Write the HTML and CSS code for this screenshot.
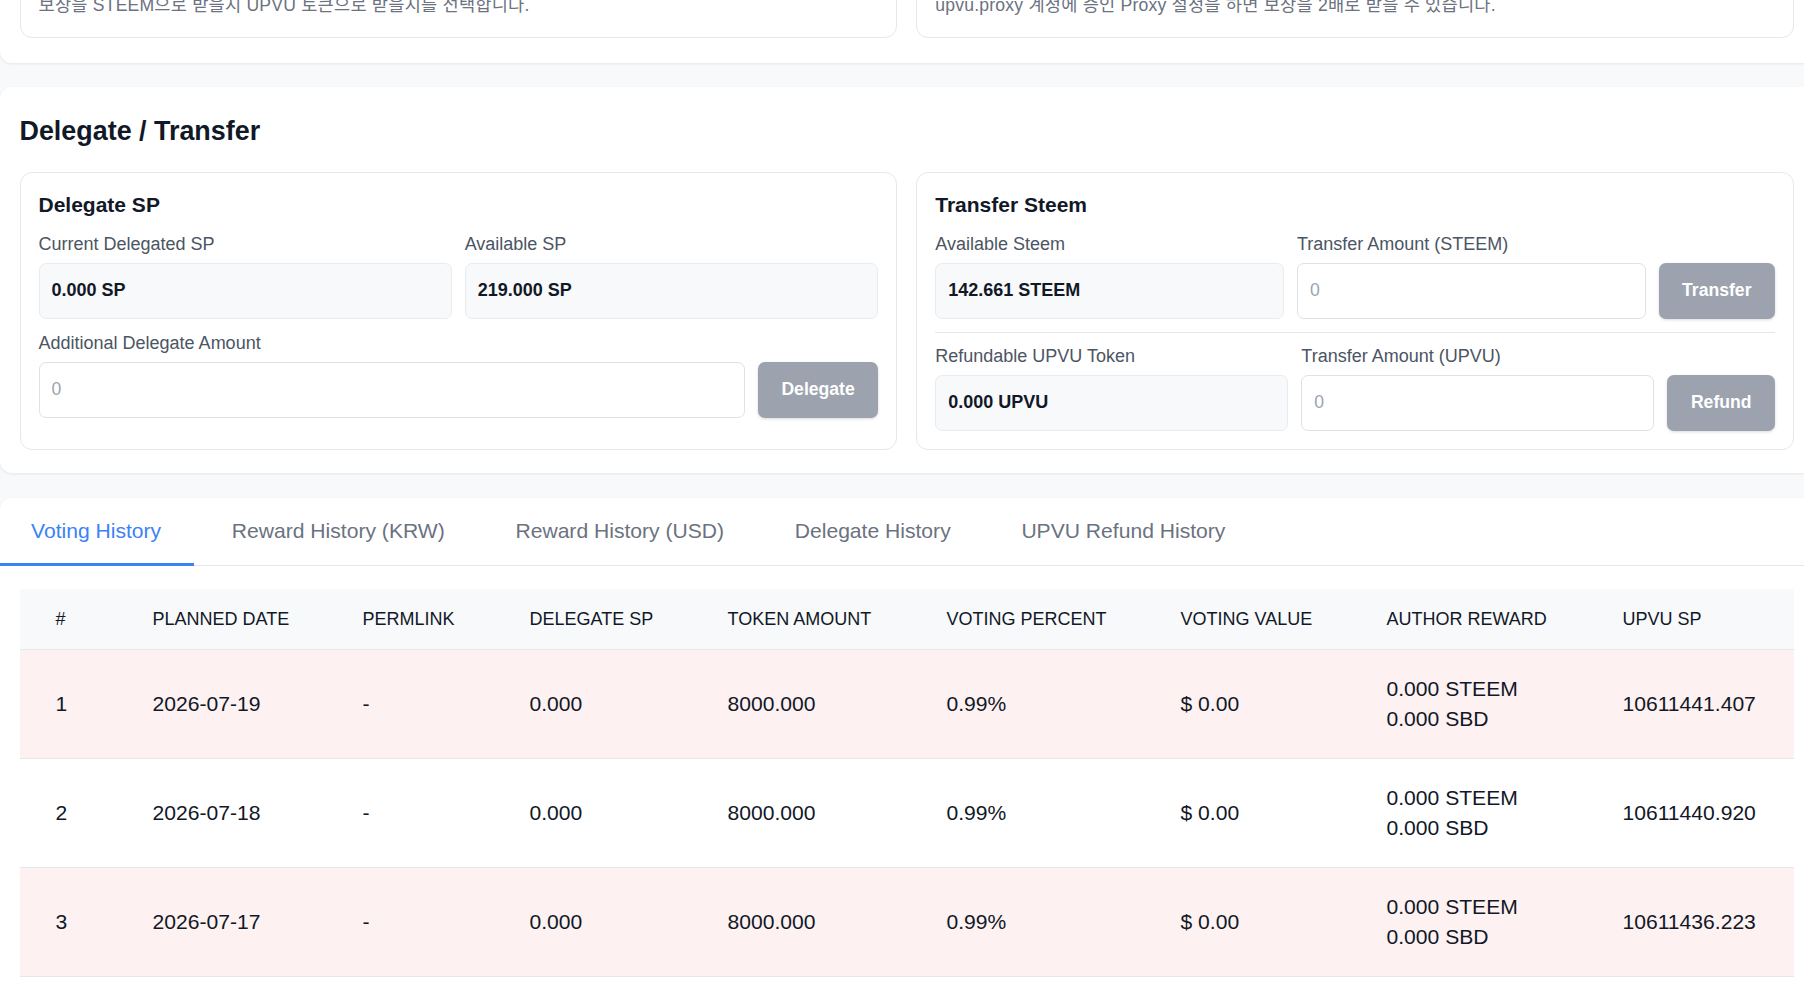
FILE: index.html
```html
<!DOCTYPE html>
<html lang="ko">
<head>
<meta charset="utf-8">
<title>UPVU - Delegate / Transfer</title>
<link rel="stylesheet" href="styles.css">
</head>
<body>
<div class="page">
  <section class="card card-top">
    <div class="grid2">
      <div class="box"><p class="desc">보상을 STEEM으로 받을시 UPVU 토큰으로 받을시를 선택합니다.</p></div>
      <div class="box"><p class="desc">upvu.proxy 계정에 증인 Proxy 설정을 하면 보상을 2배로 받을 수 있습니다.</p></div>
    </div>
  </section>

  <section class="card card-dt">
    <h2 class="section-title">Delegate / Transfer</h2>
    <div class="grid2">
      <div class="box">
        <h3 class="box-title">Delegate SP</h3>
        <div class="fields two">
          <label class="lbl">Current Delegated SP</label>
          <label class="lbl">Available SP</label>
          <div class="value">0.000 SP</div>
          <div class="value">219.000 SP</div>
        </div>
        <div class="fields one mt">
          <label class="lbl">Additional Delegate Amount</label>
          <div class="input-row">
            <input class="input" type="text" placeholder="0">
            <button class="btn">Delegate</button>
          </div>
        </div>
      </div>

      <div class="box">
        <h3 class="box-title">Transfer Steem</h3>
        <div class="fields three">
          <label class="lbl">Available Steem</label>
          <label class="lbl">Transfer Amount (STEEM)</label>
          <span></span>
          <div class="value">142.661 STEEM</div>
          <input class="input" type="text" placeholder="0">
          <button class="btn">Transfer</button>
        </div>
        <hr class="sep">
        <div class="fields three">
          <label class="lbl">Refundable UPVU Token</label>
          <label class="lbl">Transfer Amount (UPVU)</label>
          <span></span>
          <div class="value">0.000 UPVU</div>
          <input class="input" type="text" placeholder="0">
          <button class="btn">Refund</button>
        </div>
      </div>
    </div>
  </section>

  <section class="card card-history">
    <nav class="tabs">
      <span class="tab active">Voting History</span>
      <span class="tab">Reward History (KRW)</span>
      <span class="tab">Reward History (USD)</span>
      <span class="tab">Delegate History</span>
      <span class="tab">UPVU Refund History</span>
    </nav>
    <div class="table-wrap">
      <table class="history">
        <colgroup>
          <col class="c1"><col class="c2"><col class="c3"><col class="c4"><col class="c5"><col class="c6"><col class="c7"><col class="c8"><col class="c9">
        </colgroup>
        <thead>
          <tr>
            <th>#</th><th>Planned Date</th><th>Permlink</th><th>Delegate SP</th><th>Token Amount</th><th>Voting Percent</th><th>Voting Value</th><th>Author Reward</th><th>UPVU SP</th>
          </tr>
        </thead>
        <tbody>
          <tr class="pending">
            <td>1</td><td>2026-07-19</td><td>-</td><td>0.000</td><td>8000.000</td><td>0.99%</td><td>$ 0.00</td><td>0.000 STEEM<br>0.000 SBD</td><td>10611441.407</td>
          </tr>
          <tr>
            <td>2</td><td>2026-07-18</td><td>-</td><td>0.000</td><td>8000.000</td><td>0.99%</td><td>$ 0.00</td><td>0.000 STEEM<br>0.000 SBD</td><td>10611440.920</td>
          </tr>
          <tr class="pending">
            <td>3</td><td>2026-07-17</td><td>-</td><td>0.000</td><td>8000.000</td><td>0.99%</td><td>$ 0.00</td><td>0.000 STEEM<br>0.000 SBD</td><td>10611436.223</td>
          </tr>
        </tbody>
      </table>
    </div>
  </section>
</div>
</body>
</html>
```

FILE: styles.css
```css
html, body {
  margin: 0;
  padding: 0;
  overflow: hidden;
  background: #f8f9fa;
}

body {
  font-family: "Liberation Sans", Arial, "Noto Sans CJK KR", sans-serif;
  color: #111827;
  font-size: 17.6px;
}

.page {
  width: 1813.5px;
  margin-top: -46.5px;
  display: flex;
  flex-direction: column;
  gap: 24.5px;
}

.card {
  background: #fff;
  border-radius: 12px;
  box-shadow: 0 1px 3px rgba(0, 0, 0, 0.08);
}

.card-top {
  padding: 19.5px 19.5px 24.5px;
}

.grid2 {
  display: grid;
  grid-template-columns: 1fr 1fr;
  gap: 19px;
}

.box {
  border: 1px solid #e5e7eb;
  border-radius: 12px;
  padding: 18px;
  background: #fff;
}

.desc {
  margin: 0;
  font-size: 17.6px;
  line-height: 27px;
  color: #6b7280;
  letter-spacing: 0.2px;
}

.card-dt {
  padding: 27.85px 19.5px 23.7px;
}

.section-title {
  margin: 0 0 24.85px;
  font-size: 26.9px;
  line-height: 32px;
  font-weight: 700;
  color: #111827;
}

.box-title {
  margin: 0 0 14.5px;
  font-size: 21px;
  line-height: 28px;
  font-weight: 700;
  color: #111827;
}

.fields {
  display: grid;
  column-gap: 12.5px;
  row-gap: 7.5px;
}

.fields.two {
  grid-template-columns: 1fr 1fr;
}

.fields.three {
  grid-template-columns: 1fr 1fr auto;
  column-gap: 13px;
}

.fields.one {
  grid-template-columns: 1fr;
}

.fields.mt {
  margin-top: 13.6px;
}

.lbl {
  font-size: 18px;
  line-height: 22px;
  color: #4b5563;
}

.value {
  box-sizing: border-box;
  height: 56px;
  display: flex;
  align-items: center;
  padding: 0 12px;
  background: #f8f9fa;
  border: 1px solid #e9ecef;
  border-radius: 7px;
  font-size: 18px;
  font-weight: 700;
  color: #111827;
}

.input-row {
  display: grid;
  grid-template-columns: 1fr auto;
  gap: 13px;
}

.input {
  box-sizing: border-box;
  min-width: 0;
  width: 100%;
  height: 56px;
  padding: 0 12px;
  border: 1px solid #dee2e6;
  border-radius: 7px;
  background: #fff;
  font-family: inherit;
  font-size: 17.6px;
  color: #111827;
  outline: none;
}

.input::placeholder {
  color: #9ca3af;
}

.btn {
  height: 56px;
  padding: 0 23.5px;
  border: none;
  border-radius: 7px;
  background: #9ca3af;
  color: #fff;
  font-family: inherit;
  font-size: 17.6px;
  font-weight: 700;
  box-shadow: 0 1px 3px rgba(0, 0, 0, 0.15);
}

.sep {
  margin: 13.4px 0 12px;
  border: 0;
  border-top: 1px solid #e5e7eb;
}

.card-history {
  padding-bottom: 40px;
}

.tabs {
  display: flex;
  gap: 4.7px;
  border-bottom: 1px solid #e5e7eb;
}

.tab {
  padding: 21.2px 33px 20.2px;
  margin-bottom: -1px;
  font-size: 21.1px;
  line-height: normal;
  color: #6b7280;
  border-bottom: 3px solid transparent;
}

.tab:first-child {
  padding-left: 31px;
}

.tab.active {
  color: #3b82f6;
  border-bottom-color: #3b82f6;
}

.table-wrap {
  margin: 22.7px 19.5px 0;
}

.history {
  width: 100%;
  table-layout: fixed;
  border-collapse: separate;
  border-spacing: 0;
}

.c1 { width: 97px; }
.c2 { width: 210px; }
.c3 { width: 167px; }
.c4 { width: 198px; }
.c5 { width: 219px; }
.c6 { width: 234px; }
.c7 { width: 206px; }
.c8 { width: 236px; }
.c9 { width: 207.5px; }

.history th {
  background: #f8f9fa;
  padding: 17.85px 8px 17.85px 36px;
  font-size: 18px;
  line-height: 24px;
  font-weight: 400;
  text-align: left;
  text-transform: uppercase;
  color: #111827;
  border-bottom: 1px solid #e5e7eb;
  white-space: nowrap;
}

.history td {
  padding: 24px 8px 24px 36px;
  font-size: 21.1px;
  line-height: 30px;
  color: #111827;
  border-bottom: 1px solid #e5e7eb;
  vertical-align: middle;
  white-space: nowrap;
}

.history tr.pending td {
  background: #fdf1f1;
}
```
